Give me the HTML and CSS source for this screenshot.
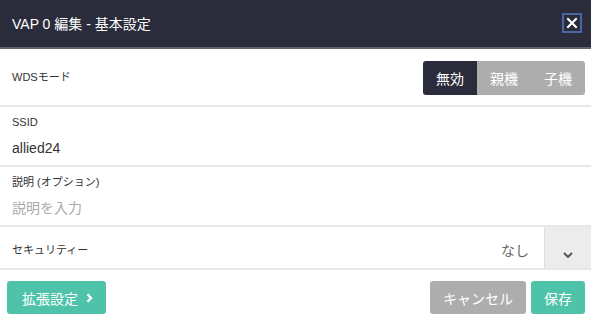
FILE: index.html
```html
<!DOCTYPE html>
<html lang="ja">
<head>
    <meta charset="UTF-8">
    <meta name="viewport" content="width=device-width, initial-scale=1.0">
    <title>VAP 0 編集 - 基本設定</title>
    <link rel="stylesheet" href="styles.css">
</head>
<body>
    <div class="modal">
        <div class="modal-header">
            <h1>VAP 0 編集 - 基本設定</h1>
            <button type="button" class="close-btn">
                <svg viewBox="0 0 12 12" width="12" height="12">
                    <path d="M2 2L10 10M10 2L2 10" stroke="white" stroke-width="2" stroke-linecap="square"/>
                </svg>
            </button>
        </div>

        <div class="row row-wds">
            <span class="label">WDSモード</span>
            <div class="segment">
                <button type="button" class="seg active">無効</button>
                <button type="button" class="seg">親機</button>
                <button type="button" class="seg">子機</button>
            </div>
        </div>

        <div class="row row-field">
            <span class="label">SSID</span>
            <div class="value">allied24</div>
        </div>

        <div class="row row-field">
            <span class="label">説明 (オプション)</span>
            <div class="value placeholder">説明を入力</div>
        </div>

        <div class="row row-select">
            <span class="label">セキュリティー</span>
            <span class="select-value">なし</span>
            <div class="select-btn">
                <svg viewBox="0 0 10 6" width="10" height="6">
                    <path d="M1 1L5 5L9 1" fill="none" stroke="#555" stroke-width="2"/>
                </svg>
            </div>
        </div>

        <div class="modal-footer">
            <button type="button" class="btn btn-teal btn-more">拡張設定
                <svg viewBox="0 0 7 10" width="7" height="10">
                    <path d="M1.5 1.2L5 5L1.5 8.8" fill="none" stroke="white" stroke-width="2.4"/>
                </svg>
            </button>
            <div class="footer-right">
                <button type="button" class="btn btn-grey">キャンセル</button>
                <button type="button" class="btn btn-teal">保存</button>
            </div>
        </div>
    </div>
</body>
</html>
```

FILE: styles.css
```css
* {
    margin: 0;
    padding: 0;
    box-sizing: border-box;
}

body {
    font-family: "Liberation Sans", "Noto Sans CJK JP", sans-serif;
    background: white;
    color: #333;
}

.modal {
    width: 591px;
    height: 321px;
    display: flex;
    flex-direction: column;
}

.modal-header {
    height: 49px;
    background: #2a2c3b;
    border-bottom: 2px solid #5f616b;
    display: flex;
    align-items: center;
    justify-content: space-between;
    padding: 0 9px 1px 12px;
}

.modal-header h1 {
    font-size: 14px;
    font-weight: normal;
    color: white;
}

.close-btn {
    width: 20px;
    height: 20px;
    background: transparent;
    border: 2px solid #4a68a6;
    display: flex;
    align-items: center;
    justify-content: center;
    margin-top: -1px;
}

.row {
    border-bottom: 2px solid #e7e7e7;
    padding: 0 12px;
}

.label {
    font-size: 11px;
    line-height: 14px;
    color: #333;
}

.row-wds {
    height: 58px;
    display: flex;
    align-items: center;
    justify-content: space-between;
    padding-right: 6px;
}

.segment {
    display: flex;
    border-radius: 3px;
    overflow: hidden;
    margin-top: 1px;
}

.seg {
    width: 54px;
    height: 34px;
    border: none;
    background: #adadad;
    color: white;
    font-family: inherit;
    font-size: 14px;
}

.seg.active {
    background: #2a2c3b;
}

.row-field {
    height: 60px;
    display: flex;
    flex-direction: column;
    padding-top: 8px;
}

.value {
    font-size: 14px;
    line-height: 20px;
    color: #333;
    margin-top: 9px;
}

.value.placeholder {
    color: #aaa;
}

.row-select {
    height: 43px;
    display: flex;
    align-items: center;
    padding-right: 0;
}

.row-select .label {
    flex: 1;
    padding-top: 4px;
}

.select-value {
    font-size: 14px;
    color: #666;
    margin-right: 15px;
    padding-top: 4px;
}

.select-btn {
    width: 47px;
    height: 100%;
    background: #ececec;
    border-left: 1px solid #dcdcdc;
    display: flex;
    justify-content: center;
    align-items: center;
    padding-top: 15px;
}

.modal-footer {
    flex: 1;
    display: flex;
    justify-content: space-between;
    align-items: flex-start;
    padding: 11px 6px 0 7px;
}

.footer-right {
    display: flex;
    gap: 5px;
}

.btn {
    height: 33px;
    border: none;
    border-radius: 3px;
    color: white;
    font-family: inherit;
    font-size: 14px;
    display: flex;
    align-items: center;
    justify-content: center;
}

.btn-teal {
    background: #4fc3a9;
    width: 54px;
}

.btn-grey {
    background: #adadad;
    width: 96px;
}

.btn-more {
    width: 99px;
    gap: 8px;
    padding-left: 2px;
}
```
